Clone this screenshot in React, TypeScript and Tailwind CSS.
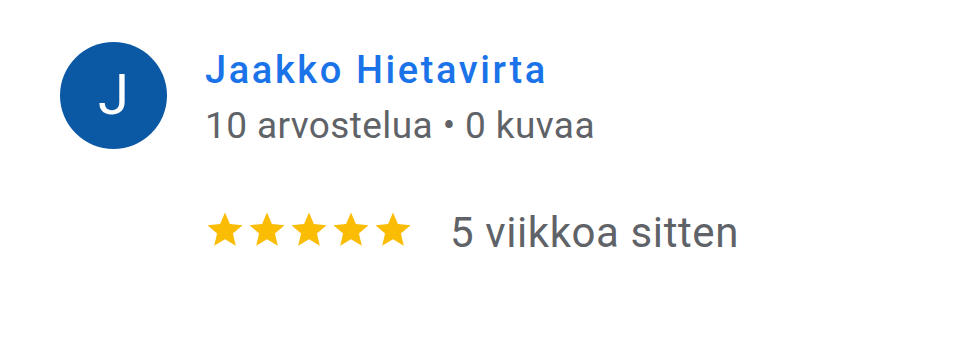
export default function App() {
  const stars = [0, 1, 2, 3, 4];

  return (
    <div className="w-[959px] h-[342px] bg-white overflow-hidden font-['Roboto',sans-serif]">
      <div className="flex pl-[60px] pt-[42px]">
        {/* avatar */}
        <div className="w-[107px] h-[107px] shrink-0 rounded-full bg-[#0b58a4] flex items-center justify-center">
          <span className="text-white text-[56px] leading-none font-normal -mt-[2px]">J</span>
        </div>

        {/* info */}
        <div className="ml-[38px] pt-[6px]">
          <div className="text-[38px] leading-[44px] font-medium tracking-[2.6px] text-[#1a73e8]">
            Jaakko Hietavirta
          </div>
          <div className="mt-[12px] text-[37px] leading-[44px] tracking-[0.4px] text-[#5f6368]">
            10 arvostelua • 0 kuvaa
          </div>

          <div className="mt-[61px] flex items-start">
            <div className="flex -ml-[1px]">
              {stars.map((i) => (
                <svg key={i} width="42" height="42" viewBox="0 0 24 24">
                  <path
                    fill="#fbbc04"
                    d="M12 17.27 18.18 21l-1.64-7.03L22 9.24l-7.19-.61L12 2 9.19 8.63 2 9.24l5.46 4.73L5.82 21z"
                  />
                </svg>
              ))}
            </div>
            <span className="ml-[36px] text-[42px] leading-[48px] tracking-[0.6px] text-[#5f6368]">
              5 viikkoa sitten
            </span>
          </div>
        </div>
      </div>
    </div>
  );
}
